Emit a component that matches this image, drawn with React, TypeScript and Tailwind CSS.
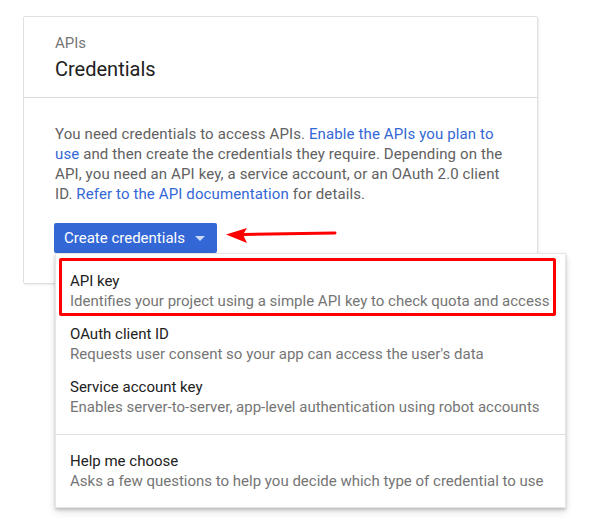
import React from 'react';

interface MenuItem {
  title: string;
  description: string;
}

const credentialTypes: MenuItem[] = [
  {
    title: 'API key',
    description: 'Identifies your project using a simple API key to check quota and access',
  },
  {
    title: 'OAuth client ID',
    description: "Requests user consent so your app can access the user's data",
  },
  {
    title: 'Service account key',
    description: 'Enables server-to-server, app-level authentication using robot accounts',
  },
];

const helpItem: MenuItem = {
  title: 'Help me choose',
  description: 'Asks a few questions to help you decide which type of credential to use',
};

function MenuRow({ item }: { item: MenuItem }) {
  return (
    <div className="px-[14px] py-[6px] whitespace-nowrap">
      <div className="text-[15px] leading-5 text-[#212121]">{item.title}</div>
      <div className="text-[15px] leading-[21px] text-[#757575]">{item.description}</div>
    </div>
  );
}

export default function App() {
  return (
    <div className="min-h-screen bg-white pt-[16px] pl-[23px] font-['Roboto',sans-serif]">
      <div className="w-[515px] bg-white border border-[#e0e0e0] rounded-[2px] shadow-[1px_1px_2px_rgba(0,0,0,0.08)]">
        {/* Header */}
        <div className="px-[31px] pt-[16px] pb-[14px] border-b border-[#dadada]">
          <div className="text-[15px] leading-5 text-[#757575]">APIs</div>
          <div className="mt-[2px] text-[20px] leading-7 text-[#212121]">Credentials</div>
        </div>

        {/* Body */}
        <div className="px-[31px] pt-[26px] pb-[30px]">
          <p className="text-[15px] leading-5 tracking-[0.12px] text-[#616161]">
            You need credentials to access APIs.{' '}
            <span className="text-[#3367d6]">Enable the APIs you plan to use</span> and then
            create the credentials they require. Depending on the API, you need an API key, a
            service account, or an OAuth 2.0 client ID.{' '}
            <span className="text-[#3367d6]">Refer to the API documentation</span> for details.
          </p>

          <div className="relative -ml-[1px] mt-[19px] flex items-start">
            <button className="h-[30px] flex items-center gap-[10px] pl-[10px] pr-[12px] bg-[#3367d6] rounded-[2px] text-[15px] text-white">
              Create credentials
              <svg width="10" height="5" viewBox="0 0 10 5">
                <polygon points="0,0 10,0 5,5" fill="rgba(255,255,255,0.75)" />
              </svg>
            </button>

            {/* Annotation arrow */}
            <svg className="ml-[9px] mt-[3px]" width="112" height="18" viewBox="0 0 112 18">
              <line x1="17" y1="8.5" x2="109" y2="7" stroke="#ff0000" strokeWidth="3" strokeLinecap="round" />
              <polygon points="0,8.5 21,2 17,8.5 21,17" fill="#ff0000" />
            </svg>

            {/* Dropdown menu */}
            <div className="absolute left-[1px] top-[30px] w-[511px] bg-white border border-[#e6e6e6] shadow-[0_2px_3px_rgba(0,0,0,0.18),0_4px_8px_rgba(0,0,0,0.12)] z-10">
              <div className="relative pt-[11px] pb-[10px]">
                {credentialTypes.map((item) => (
                  <MenuRow key={item.title} item={item} />
                ))}
                <div className="absolute left-[3px] top-[4px] w-[497px] h-[58px] border-[3px] border-[#ff0000] rounded-[2px]" />
              </div>
              <div className="border-t border-[#e0e0e0] pt-[10px] pb-[9px]">
                <MenuRow item={helpItem} />
              </div>
            </div>
          </div>
        </div>
      </div>
    </div>
  );
}
